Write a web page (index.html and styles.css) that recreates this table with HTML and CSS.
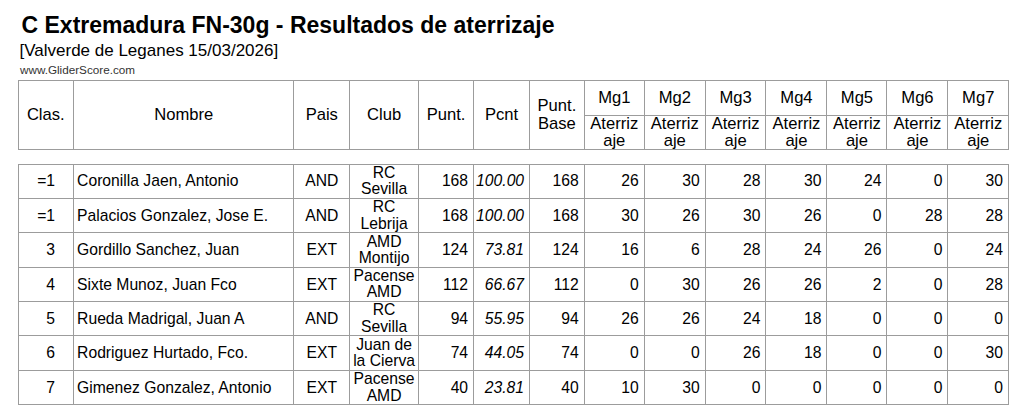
FILE: index.html
```html
<!DOCTYPE html>
<html lang="es">
<head>
<meta charset="utf-8">
<title>C Extremadura FN-30g - Resultados de aterrizaje</title>
<link rel="stylesheet" href="styles.css">
</head>
<body>
<div class="page">
  <h1 class="title">C Extremadura FN-30g - Resultados de aterrizaje</h1>
  <div class="subtitle">[Valverde de Leganes 15/03/2026]</div>
  <div class="site">www.GliderScore.com</div>

  <table class="grid head">
    <colgroup>
      <col class="c-clas"><col class="c-nombre"><col class="c-pais"><col class="c-club">
      <col class="c-punt"><col class="c-pcnt"><col class="c-base">
      <col class="c-mg1"><col class="c-mg2"><col class="c-mg3"><col class="c-mg4">
      <col class="c-mg5"><col class="c-mg6"><col class="c-mg7">
    </colgroup>
    <tr class="r1">
      <th rowspan="2">Clas.</th>
      <th rowspan="2">Nombre</th>
      <th rowspan="2">Pais</th>
      <th rowspan="2">Club</th>
      <th rowspan="2">Punt.</th>
      <th rowspan="2">Pcnt</th>
      <th rowspan="2" class="base">Punt. Base</th>
      <th>Mg1</th><th>Mg2</th><th>Mg3</th><th>Mg4</th><th>Mg5</th><th>Mg6</th><th>Mg7</th>
    </tr>
    <tr class="r2">
      <th><div class="sub">Aterrizaje</div></th>
      <th><div class="sub">Aterrizaje</div></th>
      <th><div class="sub">Aterrizaje</div></th>
      <th><div class="sub">Aterrizaje</div></th>
      <th><div class="sub">Aterrizaje</div></th>
      <th><div class="sub">Aterrizaje</div></th>
      <th><div class="sub">Aterrizaje</div></th>
    </tr>
  </table>

  <table class="grid body">
    <colgroup>
      <col class="c-clas"><col class="c-nombre"><col class="c-pais"><col class="c-club">
      <col class="c-punt"><col class="c-pcnt"><col class="c-base">
      <col class="c-mg1"><col class="c-mg2"><col class="c-mg3"><col class="c-mg4">
      <col class="c-mg5"><col class="c-mg6"><col class="c-mg7">
    </colgroup>
    <tr>
      <td class="pos">=1</td><td class="name">Coronilla Jaen, Antonio</td><td class="ctr">AND</td>
      <td class="club"><div class="box">RC Sevilla</div></td>
      <td class="num">168</td><td class="num pct">100.00</td><td class="num">168</td>
      <td class="num">26</td><td class="num">30</td><td class="num">28</td><td class="num">30</td><td class="num">24</td><td class="num">0</td><td class="num">30</td>
    </tr>
    <tr>
      <td class="pos">=1</td><td class="name">Palacios Gonzalez, Jose E.</td><td class="ctr">AND</td>
      <td class="club"><div class="box">RC Lebrija</div></td>
      <td class="num">168</td><td class="num pct">100.00</td><td class="num">168</td>
      <td class="num">30</td><td class="num">26</td><td class="num">30</td><td class="num">26</td><td class="num">0</td><td class="num">28</td><td class="num">28</td>
    </tr>
    <tr>
      <td class="pos">3</td><td class="name">Gordillo Sanchez, Juan</td><td class="ctr">EXT</td>
      <td class="club"><div class="box">AMD Montijo</div></td>
      <td class="num">124</td><td class="num pct">73.81</td><td class="num">124</td>
      <td class="num">16</td><td class="num">6</td><td class="num">28</td><td class="num">24</td><td class="num">26</td><td class="num">0</td><td class="num">24</td>
    </tr>
    <tr>
      <td class="pos">4</td><td class="name">Sixte Munoz, Juan Fco</td><td class="ctr">EXT</td>
      <td class="club"><div class="box">Pacense AMD</div></td>
      <td class="num">112</td><td class="num pct">66.67</td><td class="num">112</td>
      <td class="num">0</td><td class="num">30</td><td class="num">26</td><td class="num">26</td><td class="num">2</td><td class="num">0</td><td class="num">28</td>
    </tr>
    <tr>
      <td class="pos">5</td><td class="name">Rueda Madrigal, Juan A</td><td class="ctr">AND</td>
      <td class="club"><div class="box">RC Sevilla</div></td>
      <td class="num">94</td><td class="num pct">55.95</td><td class="num">94</td>
      <td class="num">26</td><td class="num">26</td><td class="num">24</td><td class="num">18</td><td class="num">0</td><td class="num">0</td><td class="num">0</td>
    </tr>
    <tr>
      <td class="pos">6</td><td class="name">Rodriguez Hurtado, Fco.</td><td class="ctr">EXT</td>
      <td class="club"><div class="box">Juan de la Cierva</div></td>
      <td class="num">74</td><td class="num pct">44.05</td><td class="num">74</td>
      <td class="num">0</td><td class="num">0</td><td class="num">26</td><td class="num">18</td><td class="num">0</td><td class="num">0</td><td class="num">30</td>
    </tr>
    <tr>
      <td class="pos">7</td><td class="name">Gimenez Gonzalez, Antonio</td><td class="ctr">EXT</td>
      <td class="club"><div class="box">Pacense AMD</div></td>
      <td class="num">40</td><td class="num pct">23.81</td><td class="num">40</td>
      <td class="num">10</td><td class="num">30</td><td class="num">0</td><td class="num">0</td><td class="num">0</td><td class="num">0</td><td class="num">0</td>
    </tr>
  </table>
</div>
</body>
</html>
```

FILE: styles.css
```css
* { box-sizing: border-box; }

body {
  margin: 0;
  background: #fff;
  color: #000;
  font-family: "Liberation Sans", Arial, sans-serif;
}

.page {
  padding: 12px 0 0 17.5px;
}

.title {
  margin: 0 0 0 4px;
  font-size: 23px;
  line-height: 26px;
  font-weight: bold;
}

.subtitle {
  margin: 3px 0 0 2px;
  font-size: 17px;
  line-height: 19px;
}

.site {
  margin: 3px 0 0 2.5px;
  font-size: 11.7px;
  line-height: 13px;
  color: #333;
}

.grid {
  border-collapse: collapse;
  table-layout: fixed;
  width: 991px;
}

.grid th,
.grid td {
  border: 1px solid #9c9c9c;
  padding: 0;
}

.c-clas { width: 55.6px; }
.c-nombre { width: 220.4px; }
.c-pais { width: 55.6px; }
.c-club { width: 69px; }
.c-punt { width: 55px; }
.c-pcnt { width: 56px; }
.c-base { width: 54.7px; }
.c-mg1 { width: 60px; }
.c-mg2 { width: 61px; }
.c-mg3 { width: 60.7px; }
.c-mg4 { width: 61px; }
.c-mg5 { width: 60px; }
.c-mg6 { width: 61px; }
.c-mg7 { width: 60.6px; }

.head {
  margin-top: 3.5px;
}

.head th {
  font-weight: normal;
  font-size: 16.6px;
  line-height: 17.5px;
  text-align: center;
  vertical-align: middle;
}

.head .r1 { height: 35px; }
.head .r2 { height: 34px; }

.sub {
  height: 33px;
  display: flex;
  flex-direction: column;
  justify-content: center;
  padding: 0 3px 1px;
  line-height: 17px;
  word-break: break-all;
}

.box {
  height: 33px;
  display: flex;
  flex-direction: column;
  justify-content: center;
  line-height: 16.4px;
}

.body {
  margin-top: 14px;
}

.body tr { height: 34.4px; }

.body td {
  font-size: 15.7px;
  line-height: 17.5px;
  vertical-align: middle;
  white-space: nowrap;
}

.body td.club {
  white-space: normal;
  text-align: center;
  padding: 0 1px;
}

.pos {
  text-align: right;
  padding-right: 18px !important;
}

.name {
  text-align: left;
  padding-left: 3px !important;
}

.ctr { text-align: center; }

.num {
  text-align: right;
  padding-right: 5px !important;
}

.pct { font-style: italic; }
```
